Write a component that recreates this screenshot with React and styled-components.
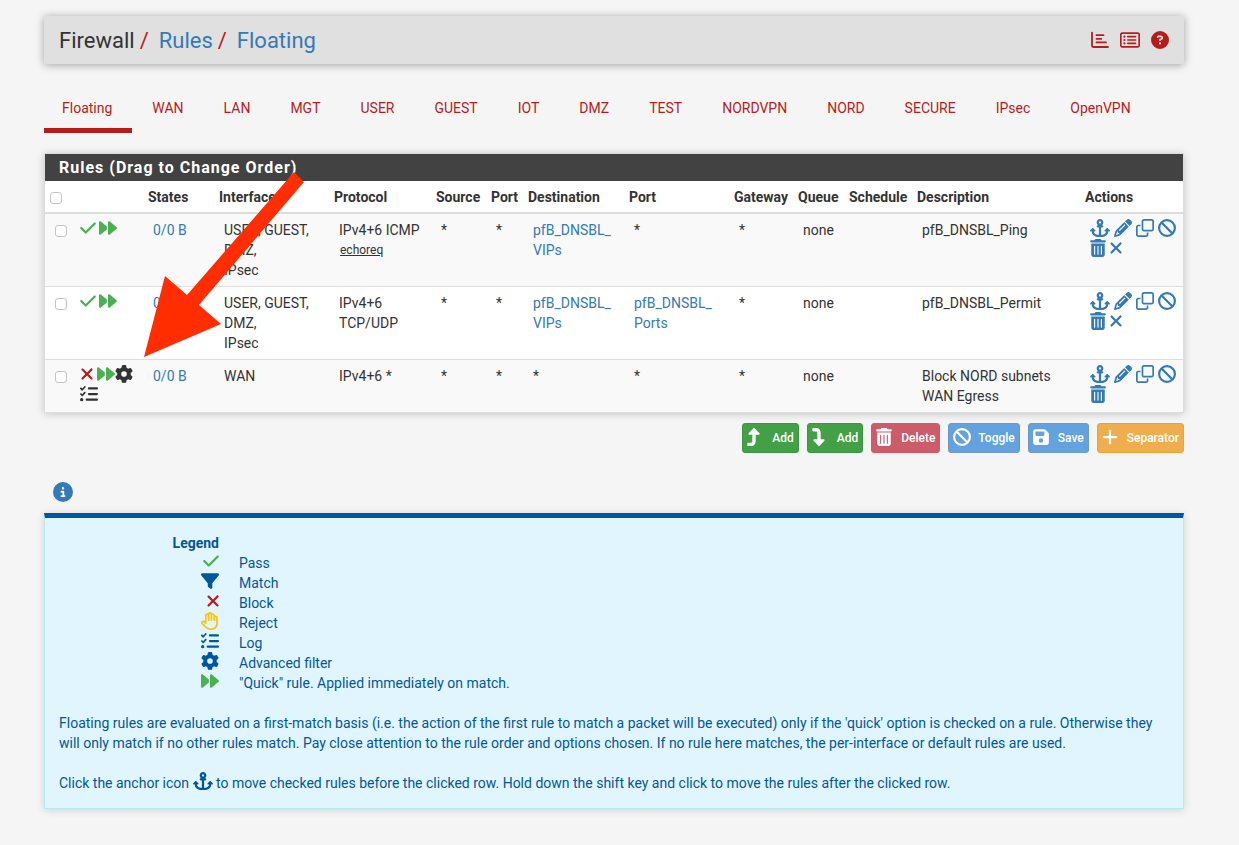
import React, { useState } from "react"
import styled, { createGlobalStyle } from "styled-components"
import {
  FaAnchor,
  FaBan,
  FaCheck,
  FaCircleInfo,
  FaCircleQuestion,
  FaFilter,
  FaFloppyDisk,
  FaForward,
  FaGear,
  FaListCheck,
  FaPencil,
  FaPlus,
  FaRegClone,
  FaRegHand,
  FaRegRectangleList,
  FaTrashCan,
  FaTurnDown,
  FaTurnUp,
  FaXmark,
} from "react-icons/fa6"

const GlobalStyle = createGlobalStyle`
  * {
    box-sizing: border-box;
  }

  body {
    margin: 0;
    background-color: #f5f5f5;
    color: #333333;
    font-family: Roboto, "Liberation Sans", sans-serif;
    font-size: 14px;
    line-height: 20px;
  }

  a {
    color: #337ab7;
    text-decoration: none;
  }
`

const Container = styled.div`
  position: relative;
  padding: 16px 55px 36px 44px;
`

const Header = styled.header`
  display: flex;
  align-items: center;
  justify-content: space-between;
  height: 48px;
  padding: 0 15px;
  background-color: #e0e0e0;
  border-radius: 2px;
  box-shadow: 0 1px 8px rgba(0, 0, 0, 0.35);
`

const Breadcrumb = styled.ol`
  display: flex;
  margin: 0;
  padding: 2px 0 0;
  list-style: none;
  font-size: 22px;
  line-height: 24px;

  li + li::before {
    content: "/";
    padding: 0 10px 0 5px;
    color: #b71c1c;
  }
`

const HeaderLinks = styled.div`
  display: flex;
  align-items: center;
  gap: 11px;

  a {
    display: flex;
    color: #b71c1c;
  }
`

const Tabs = styled.nav`
  display: flex;
  gap: 2px;
  margin-top: 24px;
`

const Tab = styled.a`
  padding: 10px 20px 10px 18px;
  border-bottom: 5px solid ${(props) => (props.$active ? "#b71c1c" : "transparent")};
  color: #b71c1c;
`

const Panel = styled.section`
  margin-top: 20px;
  border: 1px solid #dddddd;
  background-color: #ffffff;
  box-shadow: 0 1px 8px rgba(0, 0, 0, 0.2);
`

const PanelTitle = styled.h2`
  margin: 0;
  padding: 4px 14px 3px;
  background-color: #424242;
  color: #ffffff;
  font-size: 16px;
  font-weight: 700;
  line-height: 20px;
  letter-spacing: 1px;
`

const RuleTable = styled.table`
  width: 100%;
  table-layout: fixed;
  border-collapse: separate;
  border-spacing: 0;

  th {
    padding: 6px 5px 5px;
    border-bottom: 2px solid #dddddd;
    text-align: left;
    font-weight: 700;
    white-space: nowrap;
  }

  td {
    padding: 6px 5px 6px 10px;
    vertical-align: top;
  }

  tbody tr:nth-child(odd) {
    background-color: #f9f9f9;
  }

  tbody tr + tr td {
    border-top: 1px solid #dddddd;
  }

  td:nth-child(2),
  td:last-child {
    padding-top: 5px;
    padding-right: 0;
  }
`

const Checkbox = styled.input.attrs({ type: "checkbox" })`
  display: block;
  appearance: none;
  width: 12px;
  height: 12px;
  margin: 5px 0 3px;
  border: 1px solid #c4c4c4;
  border-radius: 3px;
  background-color: #ffffff;

  &:checked {
    background-color: #337ab7;
  }
`

const Hint = styled.small`
  display: block;
  padding-left: 1px;
  font-size: 12px;
  line-height: 20px;
  text-decoration: underline;
`

const Icon = styled.span`
  display: inline-flex;
  width: ${(props) => props.$width || 18}px;
  height: 18px;
  color: ${(props) => props.$color || "inherit"};

  svg {
    width: 100%;
    height: 100%;
  }
`

const IconGroup = styled.div`
  display: flex;
  flex-wrap: wrap;
  gap: 2px ${(props) => props.$gap}px;

  a {
    display: flex;
  }
`

const IconPair = styled.span`
  display: flex;
`

const colors = {
  green: "#4caf50",
  red: "#b71c1c",
  yellow: "#ffc107",
  dark: "#333333",
}

const Toolbar = styled.div`
  display: flex;
  justify-content: flex-end;
  gap: 8px;
  margin-top: 10px;
`

const Button = styled.button`
  display: flex;
  align-items: center;
  height: 30px;
  padding: 0 4px;
  border: 1px solid ${(props) => props.$border};
  border-radius: 3px;
  background-color: ${(props) => props.$color};
  color: #ffffff;
  font-family: inherit;
  font-size: 12px;
  font-weight: 500;
  line-height: 18px;
`

const ButtonIcon = styled.span`
  display: flex;
  width: 25px;
  padding-bottom: 2px;
`

const InfoToggle = styled.button`
  display: flex;
  margin: 29px 0 0 9px;
  padding: 0;
  border: 0;
  background: none;
  color: #337ab7;
  font-size: 20px;
`

const InfoBlock = styled.section`
  margin-top: 11px;
  padding: 15px 14px;
  border: 1px solid #b2ebf2;
  border-top: 5px solid #01579b;
  background-color: #e1f5fe;
  box-shadow: 0 1px 8px rgba(0, 0, 0, 0.15);
  color: #01579b;

  p {
    margin: 20px 0 0;
  }

  p ${Icon} {
    margin: -2px 0;
    vertical-align: -2px;
  }
`

const Legend = styled.dl`
  display: grid;
  grid-template-columns: 160px 1fr;
  grid-auto-rows: 20px;
  column-gap: 20px;
  margin: 0;

  dt {
    display: flex;
    justify-content: flex-end;
    font-weight: 700;
  }

  dd {
    margin: 0;
  }

  ${Icon} {
    margin-top: -1px;
  }
`

const Pointer = styled.svg`
  position: absolute;
  top: 170px;
  left: 140px;
  pointer-events: none;
`

const tabs = [
  "Floating",
  "WAN",
  "LAN",
  "MGT",
  "USER",
  "GUEST",
  "IOT",
  "DMZ",
  "TEST",
  "NORDVPN",
  "NORD",
  "SECURE",
  "IPsec",
  "OpenVPN",
]

const columns = [
  { title: "", width: 25 },
  { title: "", width: 73 },
  { title: "States", width: 71 },
  { title: "Interfaces", width: 115 },
  { title: "Protocol", width: 102 },
  { title: "Source", width: 55 },
  { title: "Port", width: 37 },
  { title: "Destination", width: 101 },
  { title: "Port", width: 105 },
  { title: "Gateway", width: 64 },
  { title: "Queue", width: 51 },
  { title: "Schedule", width: 68 },
  { title: "Description", width: 168 },
  { title: "Actions", width: 103 },
]

const rules = [
  {
    id: 1,
    action: "pass",
    interfaces: ["USER, GUEST, DMZ,", "IPsec"],
    protocol: "IPv4+6 ICMP",
    hint: "echoreq",
    destination: ["pfB_DNSBL_", "VIPs"],
    description: "pfB_DNSBL_Ping",
    clearable: true,
  },
  {
    id: 2,
    action: "pass",
    interfaces: ["USER, GUEST, DMZ,", "IPsec"],
    protocol: "IPv4+6 TCP/UDP",
    destination: ["pfB_DNSBL_", "VIPs"],
    destinationPort: ["pfB_DNSBL_", "Ports"],
    description: "pfB_DNSBL_Permit",
    clearable: true,
  },
  {
    id: 3,
    action: "block",
    interfaces: ["WAN"],
    protocol: "IPv4+6 *",
    description: "Block NORD subnets WAN Egress",
    clearable: false,
  },
]

const Cross = () => <FaXmark viewBox="32 0 320 512" />

const legend = [
  { icon: <FaCheck />, width: 16, color: colors.green, text: "Pass" },
  { icon: <FaFilter />, text: "Match" },
  { icon: <Cross />, width: 12, color: colors.red, text: "Block" },
  { icon: <FaRegHand />, color: colors.yellow, text: "Reject" },
  { icon: <FaListCheck />, text: "Log" },
  { icon: <FaGear />, text: "Advanced filter" },
  { icon: <FaForward />, color: colors.green, text: '"Quick" rule. Applied immediately on match.' },
]

const StatusIcon = () => (
  <svg viewBox="0 0 18 18" fill="none" stroke="currentColor" strokeWidth="1.8" strokeLinecap="round">
    <path d="M1 1.6v12.6a1.8 1.8 0 0 0 1.8 1.8H17" />
    <path d="M5.5 4.2h7M5.5 7.8h4.8M5.5 11.4h9.5" />
  </svg>
)

const Alias = ({ parts }) => {
  if (!parts) return "*"
  return (
    <a href="#alias">
      {parts[0]}
      <wbr />
      {parts[1]}
    </a>
  )
}

const RuleRow = ({ rule, checked, onToggle }) => (
  <tr>
    <td>
      <Checkbox aria-label={"Select rule " + rule.id} checked={checked} onChange={onToggle} />
    </td>
    <td>
      {rule.action === "pass" ? (
        <IconGroup $gap={3}>
          <Icon $width={16} $color={colors.green}><FaCheck /></Icon>
          <Icon $color={colors.green}><FaForward /></Icon>
        </IconGroup>
      ) : (
        <IconGroup $gap={3}>
          <Icon $width={14} $color={colors.red}><Cross /></Icon>
          <IconPair>
            <Icon $color={colors.green}><FaForward /></Icon>
            <Icon $color={colors.dark}><FaGear /></Icon>
          </IconPair>
          <Icon $color={colors.dark}><FaListCheck /></Icon>
        </IconGroup>
      )}
    </td>
    <td>
      <a href="#states">0/0 B</a>
    </td>
    <td>
      {rule.interfaces.map((line) => (
        <div key={line}>{line}</div>
      ))}
    </td>
    <td>
      {rule.protocol}
      {rule.hint && <Hint>{rule.hint}</Hint>}
    </td>
    <td>*</td>
    <td>*</td>
    <td>
      <Alias parts={rule.destination} />
    </td>
    <td>
      <Alias parts={rule.destinationPort} />
    </td>
    <td>*</td>
    <td>none</td>
    <td></td>
    <td>{rule.description}</td>
    <td>
      <IconGroup $gap={4}>
        <a href="#move" aria-label="Move checked rules above this one"><Icon $width={20}><FaAnchor /></Icon></a>
        <a href="#edit" aria-label="Edit"><Icon><FaPencil /></Icon></a>
        <a href="#copy" aria-label="Copy"><Icon><FaRegClone /></Icon></a>
        <a href="#disable" aria-label="Disable"><Icon><FaBan /></Icon></a>
        <a href="#delete" aria-label="Delete this rule"><Icon $width={16}><FaTrashCan /></Icon></a>
        {rule.clearable && <a href="#clear" aria-label="Clear states"><Icon $width={12}><Cross /></Icon></a>}
      </IconGroup>
    </td>
  </tr>
)

export default function App() {
  const [selected, setSelected] = useState([])
  const [infoVisible, setInfoVisible] = useState(true)

  const toggleRule = (id) => {
    setSelected(selected.includes(id) ? selected.filter((item) => item !== id) : [...selected, id])
  }

  const toggleAll = () => {
    setSelected(selected.length === rules.length ? [] : rules.map((rule) => rule.id))
  }

  return (
    <Container>
      <GlobalStyle />
      <Header>
        <Breadcrumb>
          <li>Firewall</li>
          <li><a href="#rules">Rules</a></li>
          <li><a href="#floating">Floating</a></li>
        </Breadcrumb>
        <HeaderLinks>
          <a href="#status" aria-label="Status"><Icon><StatusIcon /></Icon></a>
          <a href="#log" aria-label="Log"><Icon $width={20}><FaRegRectangleList /></Icon></a>
          <a href="#help" aria-label="Help"><Icon><FaCircleQuestion /></Icon></a>
        </HeaderLinks>
      </Header>

      <Tabs>
        {tabs.map((tab) => (
          <Tab key={tab} href={"#" + tab} $active={tab === "Floating"}>{tab}</Tab>
        ))}
      </Tabs>

      <Panel>
        <PanelTitle>Rules (Drag to Change Order)</PanelTitle>
        <RuleTable>
          <colgroup>
            {columns.map((column, index) => (
              <col key={index} width={column.width} />
            ))}
          </colgroup>
          <thead>
            <tr>
              {columns.map((column, index) => (
                <th key={index}>
                  {index === 0 ? (
                    <Checkbox
                      aria-label="Select all rules"
                      checked={selected.length === rules.length}
                      onChange={toggleAll}
                    />
                  ) : (
                    column.title
                  )}
                </th>
              ))}
            </tr>
          </thead>
          <tbody>
            {rules.map((rule) => (
              <RuleRow
                key={rule.id}
                rule={rule}
                checked={selected.includes(rule.id)}
                onToggle={() => toggleRule(rule.id)}
              />
            ))}
          </tbody>
        </RuleTable>
      </Panel>

      <Toolbar>
        <Button $color="#43a047" $border="#3d9541">
          <ButtonIcon><Icon $width={14}><FaTurnUp /></Icon></ButtonIcon>Add
        </Button>
        <Button $color="#43a047" $border="#3d9541">
          <ButtonIcon><Icon $width={14}><FaTurnDown /></Icon></ButtonIcon>Add
        </Button>
        <Button $color="#cd5c6a" $border="#df5662">
          <ButtonIcon><Icon $width={16}><FaTrashCan /></Icon></ButtonIcon>Delete
        </Button>
        <Button $color="#64a2df" $border="#6b9bc8">
          <ButtonIcon><Icon><FaBan /></Icon></ButtonIcon>Toggle
        </Button>
        <Button $color="#64a2df" $border="#6b9bc8">
          <ButtonIcon><Icon $width={16}><FaFloppyDisk /></Icon></ButtonIcon>Save
        </Button>
        <Button $color="#f0ad4e" $border="#eea236">
          <ButtonIcon><Icon $width={16}><FaPlus /></Icon></ButtonIcon>Separator
        </Button>
      </Toolbar>

      <InfoToggle aria-label="Show info" onClick={() => setInfoVisible(!infoVisible)}>
        <FaCircleInfo />
      </InfoToggle>

      {infoVisible && (
        <InfoBlock>
          <Legend>
            <dt>Legend</dt>
            <dd></dd>
            {legend.map((item) => (
              <React.Fragment key={item.text}>
                <dt><Icon $width={item.width} $color={item.color}>{item.icon}</Icon></dt>
                <dd>{item.text}</dd>
              </React.Fragment>
            ))}
          </Legend>
          <p>
            Floating rules are evaluated on a first-match basis (i.e. the action of the first rule to match a packet
            will be executed) only if the 'quick' option is checked on a rule. Otherwise they will only match if no
            other rules match. Pay close attention to the rule order and options chosen. If no rule here matches, the
            per-interface or default rules are used.
          </p>
          <p>
            Click the anchor icon <Icon $width={20}><FaAnchor /></Icon> to move checked rules before the clicked row.
            Hold down the shift key and click to move the rules after the clicked row.
          </p>
        </InfoBlock>
      )}

      <Pointer width="170" height="190" viewBox="140 170 170 190" aria-hidden="true">
        <polygon points="294,172 304,182 199,305 221,324 144,357 165,276 187,295" fill="#ff2d00" />
      </Pointer>
    </Container>
  )
}
